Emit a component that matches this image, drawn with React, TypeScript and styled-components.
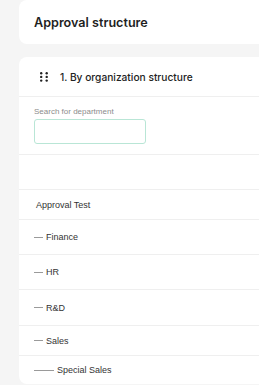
import styled, { createGlobalStyle } from "styled-components";

const GlobalStyle = createGlobalStyle`
  html, body {
    margin: 0;
    padding: 0;
    background: #f5f5f5;
    overflow: hidden;
  }
  body {
    font-family: "Liberation Sans", Arial, sans-serif;
  }
`;

const Page = styled.div`
  display: flex;
  flex-direction: column;
  gap: 13px;
  padding: 0 0 0 19px;
  width: 420px;
`;

const Card = styled.div`
  background: #ffffff;
  border-radius: 8px;
  overflow: hidden;
`;

const TitleCard = styled(Card)`
  height: 44px;
  display: flex;
  align-items: center;
  padding-left: 15px;
`;

const Title = styled.h1`
  margin: 0;
  font-family: Inter, "Noto Sans", sans-serif;
  font-size: 12.6px;
  font-weight: 600;
  color: #1f1f1f;
`;

const SectionHeader = styled.div`
  height: 39px;
  display: flex;
  align-items: center;
  gap: 12px;
  padding-left: 21px;
  border-bottom: 1px solid #efefef;
`;

const SectionTitle = styled.span`
  font-family: Inter, "Noto Sans", sans-serif;
  font-size: 10.2px;
  font-weight: 500;
  color: #222222;
`;

const SearchBlock = styled.div`
  display: flex;
  flex-direction: column;
  gap: 3px;
  padding: 10px 0 10px 15px;
  border-bottom: 1px solid #efefef;
`;

const Label = styled.label`
  font-size: 8px;
  color: #8c8c8c;
`;

const Input = styled.input`
  box-sizing: border-box;
  width: 112px;
  height: 25px;
  border: 1px solid #b9e6d6;
  border-radius: 3px;
  outline: none;
  background: #fff;
`;

const Row = styled.div<{ $h: number }>`
  height: ${({ $h }) => $h}px;
  display: flex;
  align-items: center;
  gap: 3px;
  padding-left: 15px;
  border-bottom: 1px solid #efefef;
  font-size: 9px;
  color: #333333;
  &:last-child {
    border-bottom: none;
  }
`;

const RowText = styled.span<{ $indent: number }>`
  padding-left: ${({ $indent }) => $indent}px;
`;

const Dash = styled.span<{ $w: number }>`
  display: inline-block;
  width: ${({ $w }) => $w}px;
  height: 1px;
  background: #9a9a9a;
`;

function DragIcon() {
  return (
    <svg width="8" height="10" viewBox="0 0 8 10">
      {[0, 1].map((c) =>
        [0, 1, 2].map((r) => (
          <circle key={`${c}-${r}`} cx={1.2 + c * 5.5} cy={1.2 + r * 3.7} r="1.2" fill="#222" />
        ))
      )}
    </svg>
  );
}

const rows = [
  { label: "", h: 34, depth: 0 },
  { label: "Approval Test", h: 29, depth: 0 },
  { label: "Finance", h: 34, depth: 1 },
  { label: "HR", h: 34, depth: 1 },
  { label: "R&D", h: 35, depth: 1 },
  { label: "Sales", h: 29, depth: 1 },
  { label: "Special Sales", h: 28, depth: 2 },
];

export default function App() {
  return (
    <>
      <GlobalStyle />
      <Page>
        <TitleCard>
          <Title>Approval structure</Title>
        </TitleCard>
        <Card>
          <SectionHeader>
            <DragIcon />
            <SectionTitle>1. By organization structure</SectionTitle>
          </SectionHeader>
          <SearchBlock>
            <Label>Search for department</Label>
            <Input />
          </SearchBlock>
          {rows.map((r, i) => (
            <Row key={i} $h={r.h}>
              {r.depth > 0 && <Dash $w={r.depth === 1 ? 9 : 20} />}
              <RowText $indent={r.depth === 0 ? 2 : 0}>{r.label}</RowText>
            </Row>
          ))}
        </Card>
      </Page>
    </>
  );
}
